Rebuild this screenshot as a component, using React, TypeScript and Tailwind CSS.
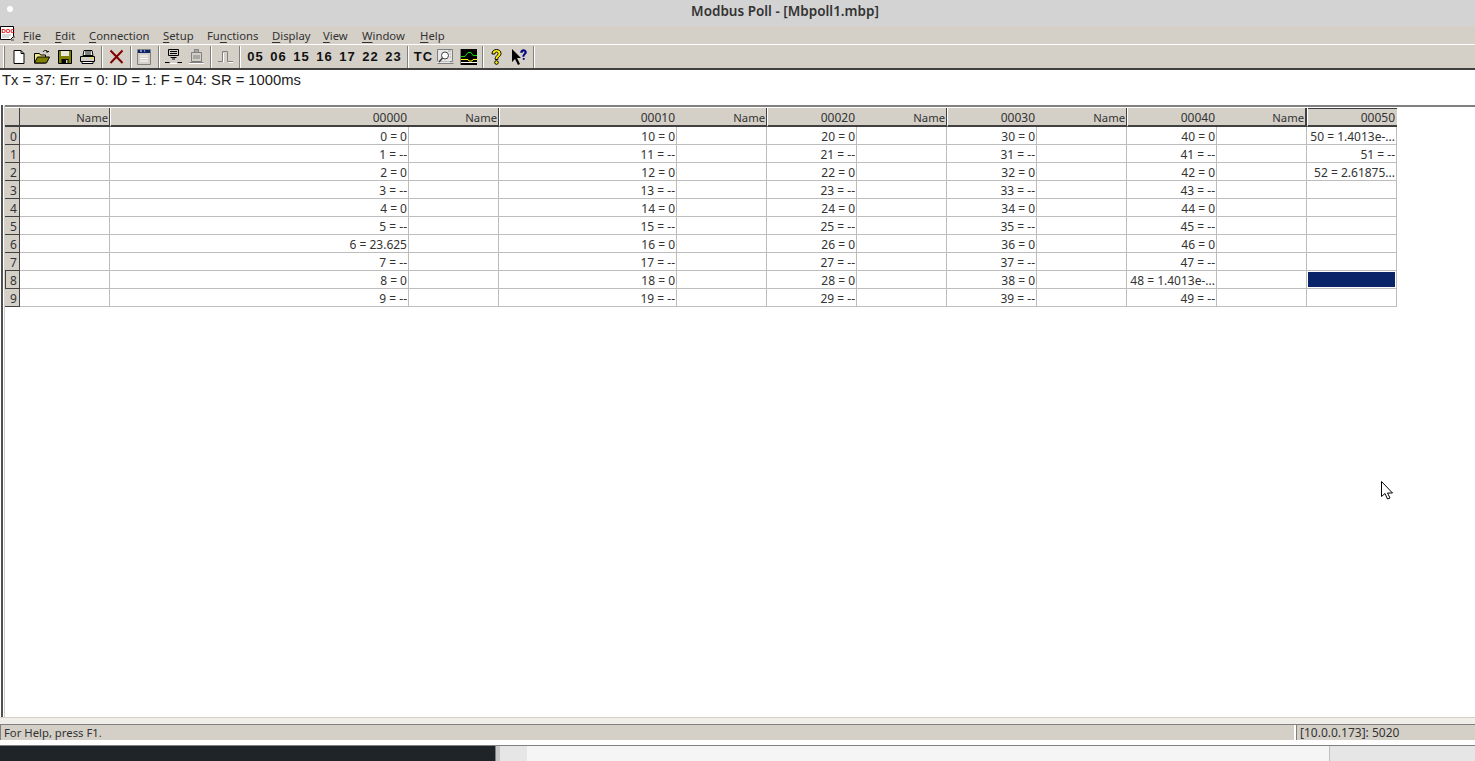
import type { ReactNode } from "react";

const uiFont = { fontFamily: '"Noto Sans", sans-serif' };

const menus = [
  { label: "File", key: "F", width: 32 },
  { label: "Edit", key: "E", width: 34 },
  { label: "Connection", key: "C", width: 74 },
  { label: "Setup", key: "S", width: 44 },
  { label: "Functions", key: "n", width: 65 },
  { label: "Display", key: "D", width: 51 },
  { label: "View", key: "V", width: 39 },
  { label: "Window", key: "W", width: 58 },
  { label: "Help", key: "H", width: 40 },
];

const MenuItem = ({ label, mark }: { label: string; mark: string }) => {
  const i = label.indexOf(mark);
  return (
    <span>
      {label.slice(0, i)}
      <span className="underline underline-offset-2">{label[i]}</span>
      {label.slice(i + 1)}
    </span>
  );
};

const Btn = ({ children }: { children: ReactNode }) => (
  <div className="flex h-[24px] w-[23px] shrink-0 items-center justify-center">{children}</div>
);

const Sep = ({ w, at }: { w: number; at: number }) => (
  <div className="relative h-[24px] shrink-0" style={{ width: w }}>
    <div className="absolute top-px bottom-px w-[2px] border-l border-r border-l-[#808080] border-r-white" style={{ left: at }} />
  </div>
);

const NumBtn = ({ t }: { t: string }) => (
  <Btn>
    <span
      className="pl-[2px] text-[13px] font-bold leading-none tracking-[1px] text-[#111]"
      style={{ fontFamily: '"Liberation Sans", sans-serif' }}
    >
      {t}
    </span>
  </Btn>
);

const NewIcon = () => (
  <svg width="16" height="16" viewBox="0 0 16 16">
    <path d="M3 1.500h7l3 3v10H3z" fill="#fff" stroke="#000" />
    <path d="M10 1.500v3h3" fill="none" stroke="#000" />
  </svg>
);
const OpenIcon = () => (
  <svg width="18" height="16" viewBox="0 0 18 16">
    <path d="M1.500 14V4.500h5l1 1.500h5v8z" fill="#f4e98a" stroke="#000" />
    <path d="M1.500 14l3-6h12l-3 6z" fill="#808000" stroke="#000" />
    <path d="M10 3c1-2 4-2 5 0M15 3l1-1M15 3l-2-.2" fill="none" stroke="#000" />
  </svg>
);
const SaveIcon = () => (
  <svg width="16" height="16" viewBox="0 0 16 16">
    <path d="M1.500 1.500h13v13h-13z" fill="#808000" stroke="#000" />
    <path d="M4 2h8v5H4z" fill="#e8e8d8" />
    <path d="M4.500 10h7v4.500h-7z" fill="#000" />
    <path d="M9 11h1.500v3H9z" fill="#d4d0c8" />
  </svg>
);
const PrintIcon = () => (
  <svg width="17" height="16" viewBox="0 0 17 16">
    <path d="M5 1.500h8l1 5H4z" fill="#fff" stroke="#000" />
    <path d="M6 3h6M6 5h6" stroke="#000" />
    <path d="M1.500 7.500h14v5h-14z" fill="#d4d0c8" stroke="#000" />
    <path d="M3 12.500h11v2H3z" fill="#fff" stroke="#000" />
    <path d="M11 9h3" stroke="#ffe000" />
  </svg>
);
const DeleteIcon = () => (
  <svg width="15" height="15" viewBox="0 0 15 15">
    <path d="M1.500 1.500l12 12.500M13.500 1.500L1.500 14" stroke="#800000" strokeWidth="2" />
  </svg>
);
const WindowIcon = () => (
  <svg width="14" height="16" viewBox="0 0 14 16">
    <path d="M.5.500h13v15H.5z" fill="#d4d0c8" stroke="#808080" />
    <path d="M1 1h12v3H1z" fill="#0a246a" />
    <path d="M3 2h2M7 2h1" stroke="#fff" />
    <path d="M3 7h8M3 9.500h8M3 12h8" stroke="#fff" />
  </svg>
);
const CommIcon = () => (
  <svg width="17" height="15" viewBox="0 0 17 15">
    <path d="M3.500.500h10v6h-10z" fill="none" stroke="#000" />
    <path d="M5 2.500h7M5 4.500h7" stroke="#000" />
    <path d="M5.500 8.500h6M7 10h3" stroke="#000" />
    <path d="M0 13.500h4.500M12.500 13.500H17" stroke="#000" />
    <path d="M5 14.500h7" stroke="#fff" />
  </svg>
);
const GrayPrintIcon = () => (
  <svg width="15" height="16" viewBox="0 0 15 16">
    <path d="M5.500.500h4v3h-4z" fill="#a8a8a8" stroke="#808080" />
    <path d="M2.500 3.500h10v9h-10z" fill="#d4d0c8" stroke="#808080" />
    <path d="M4 7h7M4 9h7" stroke="#808080" />
    <path d="M.5 13.500h14" stroke="#808080" />
    <path d="M0 14.500h15" stroke="#fff" />
  </svg>
);
const PulseIcon = () => (
  <svg width="15" height="14" viewBox="0 0 15 14">
    <path d="M0 11.500h4.500v-10h5v10H15" fill="none" stroke="#808080" />
    <path d="M5.500 12.500V3M10.500 12.500H15" fill="none" stroke="#fff" />
  </svg>
);
const SearchDocIcon = () => (
  <svg width="17" height="16" viewBox="0 0 17 16">
    <path d="M.5.500h15v12h-15z" fill="#e8e8e8" stroke="#808080" />
    <path d="M.5 14.500h16" stroke="#808080" />
    <path d="M0 13h13" stroke="#fff" />
    <circle cx="8" cy="6.500" r="3.500" fill="#fff" stroke="#404040" />
    <path d="M5.500 9L2 13" stroke="#404040" strokeWidth="1.500" />
    <path d="M11 2h3M13 5h1M13 8h1" stroke="#a0a0a0" />
  </svg>
);
const ChartIcon = () => (
  <svg width="17" height="16" viewBox="0 0 17 16">
    <path d="M0 0h17v16H0z" fill="#000" />
    <path d="M1 7.500h4l3-4h3l2 3h4" fill="none" stroke="#00e000" />
    <path d="M1 10.500h7l1 1.500h3l1-1.500h4" fill="none" stroke="#ffff00" />
    <path d="M0 13.500h17" stroke="#fff" />
    <path d="M.5 0v16" stroke="#808080" />
  </svg>
);
const HelpIcon = () => (
  <svg width="13" height="18" viewBox="0 0 13 18">
    <path
      d="M2 6C2 3 4 1.500 6.500 1.500S11 3 11 5.500c0 2-1.500 3-2.500 3.800-.7.6-.7 1.200-.7 2.200H5.200c0-1.800.4-2.800 1.500-3.700.7-.6 1.300-1.200 1.300-2.300 0-.8-.6-1.500-1.500-1.500-1 0-1.500.8-1.500 2z"
      fill="#ffee00"
      stroke="#000"
    />
    <circle cx="6.500" cy="14.500" r="1.800" fill="#ffee00" stroke="#000" />
  </svg>
);
const WhatsThisIcon = () => (
  <svg width="17" height="16" viewBox="0 0 17 16">
    <path d="M1 0v13l3-3 3 6 2-1-3-6h4z" fill="#000" />
    <path
      d="M9.500 3.500C9.500 1.500 11 .5 12.500.5s3 1 3 2.800c0 1.400-1 2-1.700 2.600-.5.400-.6.900-.6 1.600h-1.500c0-1.200.3-1.900 1-2.600.5-.5 1-.9 1-1.600 0-.6-.4-1.100-1.100-1.100-.8 0-1.100.6-1.100 1.300z"
      fill="#000080"
      stroke="#000080"
      strokeWidth="0.5"
    />
    <path d="M11.800 9h1.800v1.800h-1.800z" fill="#000080" />
  </svg>
);
const DocLogo = () => (
  <svg width="16" height="15" viewBox="0 0 16 15">
    <path d="M.5.500h13v10l-3 3h-10z" fill="#fff" stroke="#000" />
    <path d="M13 11h2M11 14h3" stroke="#404040" />
    <path d="M2 9h9M2 11h7" stroke="#b0b0b0" />
    <text x="1.500" y="6.500" fontSize="6" fontWeight="700" fill="#e00000" fontFamily="Liberation Sans, sans-serif">DOC</text>
  </svg>
);

const columns: { name: number; w: number; title: string; base: number }[] = [
  { name: 90, w: 299, title: "00000", base: 0 },
  { name: 90, w: 178, title: "00010", base: 10 },
  { name: 90, w: 90, title: "00020", base: 20 },
  { name: 90, w: 90, title: "00030", base: 30 },
  { name: 90, w: 90, title: "00040", base: 40 },
  { name: 90, w: 90, title: "00050", base: 50 },
];

const rows = [0, 1, 2, 3, 4, 5, 6, 7, 8, 9];

function cellText(base: number, r: number): string {
  if (base === 50) {
    if (r === 0) return "50 = 1.4013e-...";
    if (r === 1) return "51 = --";
    if (r === 2) return "52 = 2.61875...";
    return "";
  }
  if (base === 0 && r === 6) return "6 = 23.625";
  if (base === 40 && r === 8) return "48 = 1.4013e-...";
  return `${base + r} = ${r % 2 === 0 ? "0" : "--"}`;
}

const HeaderCell = ({ w, children, active }: { w: number; children: ReactNode; active?: boolean }) => (
  <div
    className={`h-[19px] shrink-0 overflow-hidden border-b-2 border-l border-b-[#404040] border-l-white bg-[#d4d0c8] pr-[2px] text-right text-[12px] leading-[19px] text-[#333] ${active ? "shadow-[inset_0_1px_0_#404040]" : ""}`}
    style={{ width: w }}
  >
    {children}
  </div>
);

const NameHeader = ({ w, heavy }: { w: number; heavy?: boolean }) => (
  <div
    className={`h-[19px] shrink-0 overflow-hidden border-b-2 border-b-[#404040] bg-[#d4d0c8] pr-[1px] text-right text-[11.25px] leading-[19px] text-[#333] ${heavy ? "border-r-2 border-r-[#404040]" : "border-r border-r-[#404040]"}`}
    style={{ width: w }}
  >
    Name
  </div>
);

const Cell = ({ w, children }: { w: number; children?: ReactNode }) => (
  <div
    className="h-[18px] shrink-0 overflow-hidden whitespace-nowrap border-r border-b border-[#bdbdbd] pr-[1px] text-right text-[12px] leading-[19px] text-[#333]"
    style={{ width: w }}
  >
    {children}
  </div>
);

export default function App() {
  return (
    <div className="flex h-[761px] w-[1475px] flex-col overflow-hidden bg-white" style={uiFont}>
      {/* Title bar */}
      <div className="relative flex h-[26px] shrink-0 items-center justify-center bg-[#d3d3d3] pl-[95px] text-[13.500px] font-semibold text-[#333]">
        <div className="absolute left-[7px] top-[6px] h-[6px] w-[6px] rounded-full bg-white" />
        <span className="pb-[4px]">Modbus Poll - [Mbpoll1.mbp]</span>
      </div>

      {/* Menu bar */}
      <div className="flex h-[18px] shrink-0 items-center bg-[#d4d0c8] text-[11.300px] text-[#333]">
        <div className="flex h-[18px] w-[23px] shrink-0 items-start">
          <DocLogo />
        </div>
        {menus.map(m => (
          <div key={m.label} className="shrink-0 pt-[2px]" style={{ width: m.width }}>
            <MenuItem label={m.label} mark={m.key} />
          </div>
        ))}
      </div>

      {/* Toolbar */}
      <div className="flex h-[26px] shrink-0 items-center border-t border-b-2 border-t-white border-b-[#404040] bg-[#d4d0c8]">
        <div className="ml-[3px] mr-[2px] h-[22px] w-[2px] shrink-0 border-l border-r border-l-white border-r-[#808080]" />
        <Btn><NewIcon /></Btn>
        <Btn><OpenIcon /></Btn>
        <Btn><SaveIcon /></Btn>
        <Btn><PrintIcon /></Btn>
        <Sep w={6} at={2} />
        <Btn><DeleteIcon /></Btn>
        <Sep w={4} at={2} />
        <Btn><WindowIcon /></Btn>
        <Sep w={7} at={3} />
        <Btn><CommIcon /></Btn>
        <Btn><GrayPrintIcon /></Btn>
        <Sep w={6} at={2} />
        <Btn><PulseIcon /></Btn>
        <Sep w={6} at={2} />
        {["05", "06", "15", "16", "17", "22", "23"].map(t => (
          <NumBtn key={t} t={t} />
        ))}
        <Sep w={7} at={3} />
        <NumBtn t="TC" />
        <Btn><SearchDocIcon /></Btn>
        <Btn><ChartIcon /></Btn>
        <Sep w={5} at={2} />
        <Btn><HelpIcon /></Btn>
        <Btn><WhatsThisIcon /></Btn>
        <Sep w={4} at={2} />
      </div>

      {/* Poll status line */}
      <div
        className="h-[35px] shrink-0 pl-[2px] text-[14.750px] leading-[20px] text-[#222]"
        style={{ fontFamily: '"Liberation Sans", sans-serif' }}
      >
        Tx = 37: Err = 0: ID = 1: F = 04: SR = 1000ms
      </div>

      {/* Document area */}
      <div className="flex min-h-0 flex-1">
        <div className="ml-px w-[2px] shrink-0 bg-[#505050]" />
        <div className="ml-px w-px shrink-0 bg-[#d4d0c8]" />
        <div className="min-w-0 flex-1 border-t-2 border-t-[#808080] pt-px">
          <div className="flex">
            <div className="h-[19px] w-[15px] shrink-0 border-r border-b-2 border-r-[#404040] border-b-[#404040] bg-[#d4d0c8]" />
            {columns.map((c, i) => (
              <div key={c.title} className="flex">
                <NameHeader w={c.name} heavy={i === 5} />
                <HeaderCell w={c.w} active={i === 5}>{c.title}</HeaderCell>
              </div>
            ))}
          </div>
          {rows.map(r => (
            <div key={r} className="flex">
              <div
                className={`h-[18px] w-[15px] shrink-0 border-r border-b border-r-[#404040] border-b-[#404040] bg-[#d4d0c8] pl-[5px] text-[12px] leading-[19px] text-[#333] ${r === 8 ? "shadow-[inset_1px_0_0_#404040]" : ""}`}
              >
                {r}
              </div>
              {columns.map(c => {
                const selected = c.base === 50 && r === 8;
                return (
                  <div key={c.title} className="flex">
                    <Cell w={c.name} />
                    <Cell w={c.w}>
                      {selected ? <div className="mt-px ml-px h-[15px] w-[87px] bg-[#0a246a]" /> : cellText(c.base, r)}
                    </Cell>
                  </div>
                );
              })}
            </div>
          ))}
        </div>
      </div>

      {/* Bottom edge of the MDI frame */}
      <div className="h-[8px] shrink-0 border-t border-b border-t-[#d4d0c8] border-b-[#808080] bg-[#f0eee9]" />

      {/* Status bar */}
      <div className="flex h-[21px] shrink-0 border-b border-b-[#808080] bg-white text-[#333]">
        <div className="h-[15px] w-[1294px] shrink-0 border-l border-l-[#808080] bg-[#d4d0c8] pl-[3px] text-[11.300px] leading-[15px]">For Help, press F1.</div>
        <div className="ml-[2px] h-[15px] flex-1 border-l border-l-[#808080] bg-[#d4d0c8] pl-[3px] text-[12px] leading-[15px]">[10.0.0.173]: 5020</div>
      </div>

      {/* Desktop strip */}
      <div className="flex h-[15px] shrink-0">
        <div className="w-[495px] shrink-0 bg-[#1f2428]" />
        <div className="w-[5px] shrink-0 border-l border-l-[#808080] bg-[#c8c8c8]" />
        <div className="w-[27px] shrink-0 bg-[#e6e6e6]" />
        <div className="w-[802px] shrink-0 bg-[#f5f5f5]" />
        <div className="flex-1 border-l border-l-[#c0c0c0] bg-[#e6e6e6]" />
      </div>

      {/* Mouse pointer */}
      <svg className="absolute left-[1381px] top-[481px]" width="13" height="19" viewBox="0 0 13 19">
        <path d="M.5.500v15l3.500-3 2.500 5.500 2.500-1-2.500-5h5z" fill="#fff" stroke="#000" />
      </svg>
    </div>
  );
}
